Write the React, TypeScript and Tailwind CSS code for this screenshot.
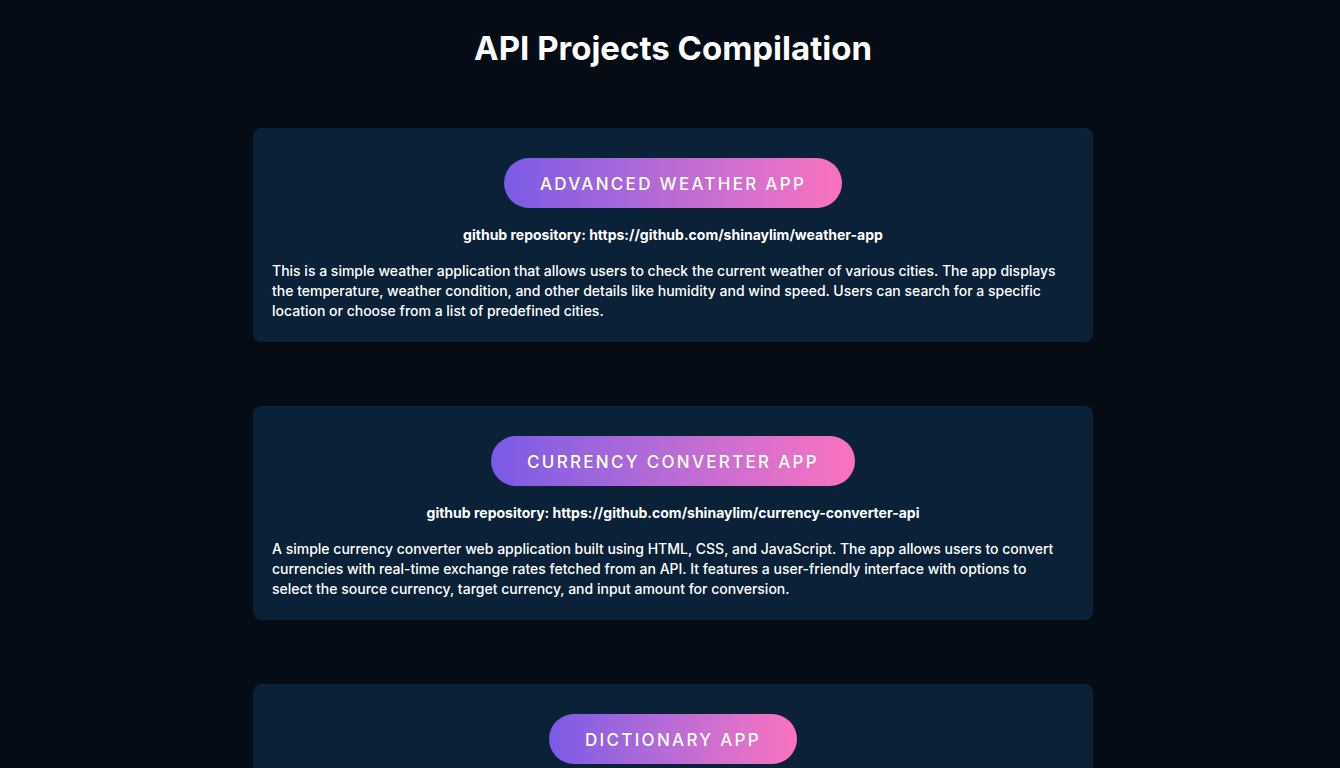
const projects = [
  {
    title: "Advanced Weather App",
    repo: "https://github.com/shinaylim/weather-app",
    description:
      "This is a simple weather application that allows users to check the current weather of various cities. The app displays the temperature, weather condition, and other details like humidity and wind speed. Users can search for a specific location or choose from a list of predefined cities.",
  },
  {
    title: "Currency Converter App",
    repo: "https://github.com/shinaylim/currency-converter-api",
    description:
      "A simple currency converter web application built using HTML, CSS, and JavaScript. The app allows users to convert currencies with real-time exchange rates fetched from an API. It features a user-friendly interface with options to select the source currency, target currency, and input amount for conversion.",
  },
  {
    title: "Dictionary App",
    repo: "https://github.com/shinaylim/dictionary-app",
    description:
      "A simple dictionary web application that lets users look up the meaning, pronunciation and examples of English words using a free dictionary API.",
  },
];

function ProjectCard({ title, repo, description }: (typeof projects)[number]) {
  return (
    <section className="w-[840px] rounded-lg bg-[#0b2137] px-[19px] pt-[30px] pb-[21px]">
      <div className="flex justify-center">
        <a
          href={repo}
          className="flex h-[50px] items-center rounded-full bg-gradient-to-r from-[#7a5ae6] to-[#fb72bf] px-9 pt-[3px] text-[17px] font-medium uppercase tracking-[0.135em] text-white"
        >
          {title}
        </a>
      </div>
      <p className="mt-[17px] text-center text-[14px] font-bold leading-5 text-white">
        github repository: {repo}
      </p>
      <p className="mt-[16px] pr-[10px] text-[14px] font-medium leading-5 text-white">
        {description}
      </p>
    </section>
  );
}

export default function App() {
  return (
    <div className="min-h-screen bg-[#050c16] pl-[6px] font-['Inter',sans-serif] text-white">
      <h1 className="pt-[24px] text-center text-[33px] font-bold leading-[48px]">
        API Projects Compilation
      </h1>
      <main className="mt-[56px] flex flex-col items-center gap-16 pb-16">
        {projects.map((p) => (
          <ProjectCard key={p.title} {...p} />
        ))}
      </main>
    </div>
  );
}
